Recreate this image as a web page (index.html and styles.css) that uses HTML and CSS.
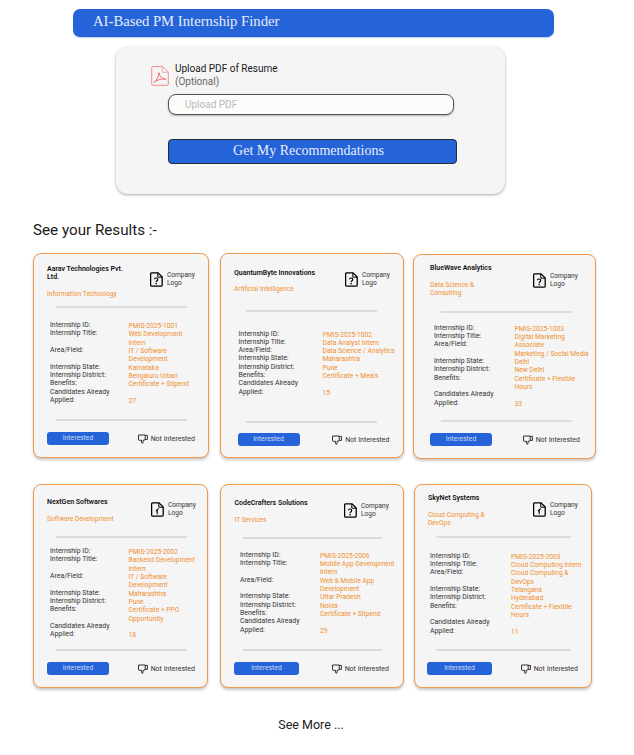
FILE: index.html
```html
<!DOCTYPE html>
<html lang="en">
<head>
<meta charset="utf-8">
<title>AI-Based PM Internship Finder</title>
<link rel="stylesheet" href="styles.css">
</head>
<body>
<svg class="defs" width="0" height="0" aria-hidden="true">
  <symbol id="doc-q" viewBox="0 0 13 15">
    <path d="M1.8 .8H8L12.2 5V13a1.2 1.2 0 0 1-1.2 1.2H1.8A1.2 1.2 0 0 1 .6 13V2A1.2 1.2 0 0 1 1.8 .8Z" fill="none" stroke="#000" stroke-width="1.3"/>
    <path d="M7.8 .8V5.2H12.2" fill="none" stroke="#000" stroke-width="1"/>
    <path d="M4.4 7.2C4.5 5.6 7.7 5.6 7.7 7.4C7.7 8.7 6.1 8.7 6.1 10.2" fill="none" stroke="#000" stroke-width="1.2"/>
    <rect x="5.5" y="11" width="1.3" height="1.4" fill="#000"/>
  </symbol>
  <symbol id="doc-up" viewBox="0 0 13 15">
    <path d="M1.8 .8H8L12.2 5V13a1.2 1.2 0 0 1-1.2 1.2H1.8A1.2 1.2 0 0 1 .6 13V2A1.2 1.2 0 0 1 1.8 .8Z" fill="none" stroke="#000" stroke-width="1.3"/>
    <path d="M7.8 .8V5.2H12.2" fill="none" stroke="#000" stroke-width="1"/>
    <path d="M6.2 12.2V8.2C6.2 7.2 6.9 6.8 7.9 6.8M4.9 9.2L6.2 7.8" fill="none" stroke="#000" stroke-width="1.1"/>
  </symbol>
  <symbol id="thumb" viewBox="0 0 10 10">
    <path d="M.6 1H7.2V5.8L5.3 6.2L4.8 9.2C4 9.5 3.4 8.9 3.5 8.1L3.7 6.3H1.2C.6 6.3.4 5.9.5 5.4Z M7.2 1.4H9.4V5.4H7.2" fill="none" stroke="#1a1a1a" stroke-width=".9" stroke-linejoin="round"/>
  </symbol>
</svg>

<header class="topbar"><h1 class="topbar-title">AI-Based PM Internship Finder</h1></header>

<section class="upload">
  <div class="upload-head">
    <svg class="pdf-icon" viewBox="0 0 18 20" aria-hidden="true">
      <path d="M1.8 .6H11.4L17.3 6.2V18a1.3 1.3 0 0 1-1.3 1.3H2A1.3 1.3 0 0 1 .7 18V1.7A1.3 1.3 0 0 1 1.8 .6Z" fill="none" stroke="#f28b8b" stroke-width="1"/>
      <path d="M11.2 .8V6.3H17" fill="none" stroke="#f28b8b" stroke-width=".7"/>
      <path d="M3 16.6C5.5 14.8 7.6 11 8 6.6C8.6 10.5 11 13 15 13.3C11 12.6 6.5 13.4 3 16.6Z" fill="none" stroke="#ef6f6f" stroke-width="1"/>
    </svg>
    <p class="upload-label">Upload PDF of Resume<br><span class="optional">(Optional)</span></p>
  </div>
  <div class="upload-input">Upload PDF</div>
  <button class="recommend" type="button">Get My Recommendations</button>
</section>

<h2 class="results-title">See your Results :-</h2>

<div class="row row-a">
  <article class="card c1">
    <div class="head">
      <div class="titles"><h3 class="name">Aarav Technologies Pvt. Ltd.</h3><p class="cat">Information Technology</p></div>
      <div class="logo"><svg class="logo-icon"><use href="#doc-q"/></svg><span class="logo-text">Company<br>Logo</span></div>
    </div>
    <div class="rule"></div>
    <dl class="details">
      <dt>Internship ID:</dt><dd>PMIS-2025-1001</dd>
      <dt>Internship Title:</dt><dd>Web Development Intern</dd>
      <dt>Area/Field:</dt><dd>IT / Software Development</dd>
      <dt>Internship State:</dt><dd>Karnataka</dd>
      <dt>Internship District:</dt><dd>Bengaluru Urban</dd>
      <dt>Benefits:</dt><dd>Certificate + Stipend</dd>
      <dt>Candidates Already Applied:</dt><dd class="count">27</dd>
    </dl>
    <div class="rule"></div>
    <div class="actions"><button class="yes" type="button">Interested</button><span class="no"><svg class="thumb"><use href="#thumb"/></svg>Not Interested</span></div>
  </article>

  <article class="card c2">
    <div class="head">
      <div class="titles"><h3 class="name">QuantumByte Innovations</h3><p class="cat">Artificial Intelligence</p></div>
      <div class="logo"><svg class="logo-icon"><use href="#doc-q"/></svg><span class="logo-text">Company<br>Logo</span></div>
    </div>
    <div class="rule"></div>
    <dl class="details">
      <dt>Internship ID:</dt><dd>PMIS-2025-1002</dd>
      <dt>Internship Title:</dt><dd>Data Analyst Intern</dd>
      <dt>Area/Field:</dt><dd>Data Science / Analytics</dd>
      <dt>Internship State:</dt><dd>Maharashtra</dd>
      <dt>Internship District:</dt><dd>Pune</dd>
      <dt>Benefits:</dt><dd>Certificate + Meals</dd>
      <dt>Candidates Already Applied:</dt><dd class="count">15</dd>
    </dl>
    <div class="rule"></div>
    <div class="actions"><button class="yes" type="button">Interested</button><span class="no"><svg class="thumb"><use href="#thumb"/></svg>Not Interested</span></div>
  </article>

  <article class="card c3">
    <div class="head">
      <div class="titles"><h3 class="name">BlueWave Analytics</h3><p class="cat">Data Science &amp; Consulting</p></div>
      <div class="logo"><svg class="logo-icon"><use href="#doc-q"/></svg><span class="logo-text">Company<br>Logo</span></div>
    </div>
    <div class="rule"></div>
    <dl class="details">
      <dt>Internship ID:</dt><dd>PMIS-2025-1003</dd>
      <dt>Internship Title:</dt><dd class="span-two">Digital Marketing Associate</dd>
      <dt>Area/Field:</dt><dd>Marketing / Social Media</dd>
      <dt>Internship State:</dt><dd>Delhi</dd>
      <dt>Internship District:</dt><dd>New Delhi</dd>
      <dt>Benefits:</dt><dd>Certificate + Flexible Hours</dd>
      <dt>Candidates Already Applied:</dt><dd class="count">33</dd>
    </dl>
    <div class="rule"></div>
    <div class="actions"><button class="yes" type="button">Interested</button><span class="no"><svg class="thumb"><use href="#thumb"/></svg>Not Interested</span></div>
  </article>
</div>

<div class="row row-b">
  <article class="card c4">
    <div class="head">
      <div class="titles"><h3 class="name">NextGen Softwares</h3><p class="cat">Software Development</p></div>
      <div class="logo"><svg class="logo-icon"><use href="#doc-up"/></svg><span class="logo-text">Company<br>Logo</span></div>
    </div>
    <div class="rule"></div>
    <dl class="details">
      <dt>Internship ID:</dt><dd>PMIS-2025-2002</dd>
      <dt>Internship Title:</dt><dd>Backend Development Intern</dd>
      <dt>Area/Field:</dt><dd>IT / Software Development</dd>
      <dt>Internship State:</dt><dd>Maharashtra</dd>
      <dt>Internship District:</dt><dd>Pune</dd>
      <dt>Benefits:</dt><dd>Certificate + PPO Opportunity</dd>
      <dt>Candidates Already Applied:</dt><dd class="count">18</dd>
    </dl>
    <div class="rule"></div>
    <div class="actions"><button class="yes" type="button">Interested</button><span class="no"><svg class="thumb"><use href="#thumb"/></svg>Not Interested</span></div>
  </article>

  <article class="card c5">
    <div class="head">
      <div class="titles"><h3 class="name">CodeCrafters Solutions</h3><p class="cat">IT Services</p></div>
      <div class="logo"><svg class="logo-icon"><use href="#doc-q"/></svg><span class="logo-text">Company<br>Logo</span></div>
    </div>
    <div class="rule"></div>
    <dl class="details">
      <dt>Internship ID:</dt><dd>PMIS-2025-2006</dd>
      <dt>Internship Title:</dt><dd>Mobile App Development Intern</dd>
      <dt>Area/Field:</dt><dd>Web &amp; Mobile App Development</dd>
      <dt>Internship State:</dt><dd>Uttar Pradesh</dd>
      <dt>Internship District:</dt><dd>Noida</dd>
      <dt>Benefits:</dt><dd>Certificate + Stipend</dd>
      <dt>Candidates Already Applied:</dt><dd class="count">29</dd>
    </dl>
    <div class="rule"></div>
    <div class="actions"><button class="yes" type="button">Interested</button><span class="no"><svg class="thumb"><use href="#thumb"/></svg>Not Interested</span></div>
  </article>

  <article class="card c6">
    <div class="head">
      <div class="titles"><h3 class="name">SkyNet Systems</h3><p class="cat">Cloud Computing &amp; DevOps</p></div>
      <div class="logo"><svg class="logo-icon"><use href="#doc-up"/></svg><span class="logo-text">Company<br>Logo</span></div>
    </div>
    <div class="rule"></div>
    <dl class="details">
      <dt>Internship ID:</dt><dd>PMIS-2025-2003</dd>
      <dt>Internship Title:</dt><dd>Cloud Computing Intern</dd>
      <dt>Area/Field:</dt><dd>Cloud Computing &amp; DevOps</dd>
      <dt>Internship State:</dt><dd>Telangana</dd>
      <dt>Internship District:</dt><dd>Hyderabad</dd>
      <dt>Benefits:</dt><dd>Certificate + Flexible Hours</dd>
      <dt>Candidates Already Applied:</dt><dd class="count">11</dd>
    </dl>
    <div class="rule"></div>
    <div class="actions"><button class="yes" type="button">Interested</button><span class="no"><svg class="thumb"><use href="#thumb"/></svg>Not Interested</span></div>
  </article>
</div>

<p class="see-more">See More ...</p>
</body>
</html>
```
FILE: styles.css
```css
* { box-sizing: border-box; }
html, body { margin: 0; padding: 0; }
body {
  width: 634px;
  height: 755px;
  overflow: hidden;
  background: #fff;
  color: #1a1a1a;
  font-family: Roboto, "Noto Sans", sans-serif;
  padding-top: 9px;
}
.defs { position: absolute; }
.topbar {
  margin-left: 73px;
  width: 481px;
  height: 28px;
  background: #2563d9;
  border-radius: 7px;
  padding-left: 20px;
  display: flex;
  align-items: center;
  box-shadow: 0 1px 1px rgba(37, 99, 217, .3);
}
.topbar-title {
  margin: 0 0 4px;
  font: 400 14.7px/16px "Liberation Serif", serif;
  color: #e8eefb;
}
.upload {
  margin: 10px 0 0 116px;
  width: 389px;
  height: 147px;
  background: #f5f5f5;
  border-radius: 12px;
  box-shadow: 0 1px 3px rgba(0, 0, 0, .35);
  padding: 19px 0 0 35px;
}
.upload-head { display: flex; gap: 6px; height: 28px; }
.pdf-icon { width: 18px; height: 20px; flex: none; }
.upload-label {
  margin: -4px 0 0;
  font-size: 10px;
  line-height: 13px;
  color: #1a1a1a;
}
.optional { color: #666; }
.upload-input {
  margin: 0 0 0 17px;
  width: 286px;
  height: 21px;
  background: #fdfcfb;
  border: 1px solid #555;
  border-radius: 8px;
  box-shadow: 0 1px 2px rgba(0, 0, 0, .3);
  padding-left: 16px;
  font-size: 10px;
  line-height: 20px;
  color: #b8b8b8;
}
.recommend {
  display: block;
  margin: 24px 0 0 17px;
  width: 289px;
  height: 25px;
  padding: 0 8px 2px 0;
  background: #2563d9;
  border: 1px solid #222b3a;
  border-radius: 4px;
  font: 400 14px/16px "Liberation Serif", serif;
  color: #e8eefb;
}
.results-title {
  margin: 27px 0 0 33px;
  font-weight: 400;
  font-size: 15.2px;
  line-height: 18px;
  color: #1a1a1a;
}
.row { display: flex; margin-left: 33px; }
.row-a { margin-top: 14px; }
.row-b { margin-top: 25px; }

.card {
  --head-h: 52px;
  --head-x: 13px;
  --head-y: 10.5px;
  --title-w: 103px;
  --name-w: 100%;
  --cat-w: 100%;
  --logo-y: 7.5px;
  --rule-x: 22px;
  --rule-w: 131px;
  --det-x: 16px;
  --det-y: 14px;
  --det-h: 111px;
  --col-w: 78.5px;
  --val-w: 72px;
  --act-x: 13px;
  --act-y: 11px;
  --act-w: 148px;
  flex: none;
  width: var(--card-w);
  height: 205px;
  background: #f5f5f5;
  border: 1px solid #f2994a;
  border-radius: 8px;
  box-shadow: 0 2px 3px rgba(0, 0, 0, .22);
}
.head {
  display: flex;
  height: var(--head-h);
  padding: var(--head-y) 0 0 var(--head-x);
}
.titles { width: var(--title-w); flex: none; }
.name {
  margin: 0;
  width: var(--name-w);
  font-size: 7px;
  line-height: 8.3px;
  font-weight: 600;
  color: #111;
}
.cat {
  margin: 8.5px 0 0;
  width: var(--cat-w);
  font-size: 6.6px;
  line-height: 8.3px;
  color: #f0902f;
}
.logo {
  display: flex;
  gap: 4px;
  margin-top: var(--logo-y);
}
.logo-icon { width: 13px; height: 15px; flex: none; }
.logo-text {
  margin-top: -1px;
  font-size: 6.6px;
  line-height: 8.3px;
  color: #333;
}
.rule {
  width: var(--rule-w);
  height: 2px;
  margin-left: var(--rule-x);
  background: #dcdcdc;
}
.details {
  display: grid;
  grid-template-columns: var(--col-w) var(--val-w);
  align-content: start;
  margin: 0;
  padding: var(--det-y) 0 0 var(--det-x);
  height: var(--det-h);
  font-size: 6.9px;
  line-height: 8.33px;
}
.details dt { grid-column: 1; color: #333; width: 62px; }
.details dd {
  grid-column: 2;
  margin: 1px 0 -1px;
  color: #f0902f;
  font-size: 6.7px;
}
.details .count { align-self: end; }
.details .span-two { grid-row: span 2; }
.actions {
  display: flex;
  justify-content: space-between;
  align-items: center;
  width: var(--act-w);
  margin: var(--act-y) 0 0 var(--act-x);
}
.yes {
  width: 62px;
  height: 13px;
  padding: 0;
  border: 0;
  border-radius: 3px;
  background: #2563d9;
  color: #cfdcf7;
  font-family: inherit;
  font-size: 6.8px;
  line-height: 13px;
}
.no {
  display: flex;
  align-items: center;
  gap: 3px;
  font-size: 7px;
  line-height: 10px;
  color: #333;
}
.thumb { width: 10px; height: 10px; flex: none; }

.c1 { --card-w: 176px; --name-w: 80px; --det-y: 13px; margin-right: 11px; }
.c2 {
  --head-y: 14.5px; --card-w: 184px; --title-w: 111px; --logo-y: 3.5px;
  --head-h: 56px; --rule-x: 25px; --det-x: 17.5px; --det-y: 17.5px; --det-h: 109px; --col-w: 84px;
  --val-w: 80px; --act-x: 16.5px; --act-w: 152px; --act-y: 10px;
  margin-right: 9px;
}
.c3 {
  --card-w: 183px; --head-x: 16px; --head-y: 9px; --title-w: 103px; --cat-w: 72px; --logo-y: 9px;
  --head-h: 56px; --rule-x: 27px; --det-x: 20px; --det-y: 10.8px; --det-h: 107px; --col-w: 80.5px;
  --val-w: 78px; --act-x: 16px; --act-w: 150px;
  margin-top: 1px;
}
.c4 {
  --card-w: 175px; --head-y: 13px; --logo-y: 4px; --title-w: 104px; --head-h: 51px; --det-y: 9px;
  margin-right: 12px;
}
.c5 {
  --card-w: 184px; --head-y: 14px; --head-x: 13.5px; --title-w: 109.5px; --logo-y: 4px; --head-h: 52px;
  --rule-x: 22px; --rule-w: 139px; --det-x: 19px; --det-y: 11.8px; --det-h: 110px; --col-w: 80px; --val-w: 80px;
  --act-x: 13px; --act-w: 155px;
  margin-right: 10px;
}
.c6 {
  --card-w: 178px; --head-y: 9px; --title-w: 105px; --cat-w: 72px; --logo-y: 8px; --head-h: 51px;
  --rule-x: 21px; --rule-w: 135px; --det-x: 15px; --det-y: 13.8px; --col-w: 81px; --val-w: 76px;
  --act-x: 12px; --act-w: 151px;
}
.c4, .c5, .c6 { height: 204px; }
.c5 .yes, .c6 .yes { width: 65px; }
.see-more {
  margin: 29px 0 0;
  text-align: center;
  padding-right: 12px;
  font-size: 12.5px;
  line-height: 16px;
  color: #222;
}
```
